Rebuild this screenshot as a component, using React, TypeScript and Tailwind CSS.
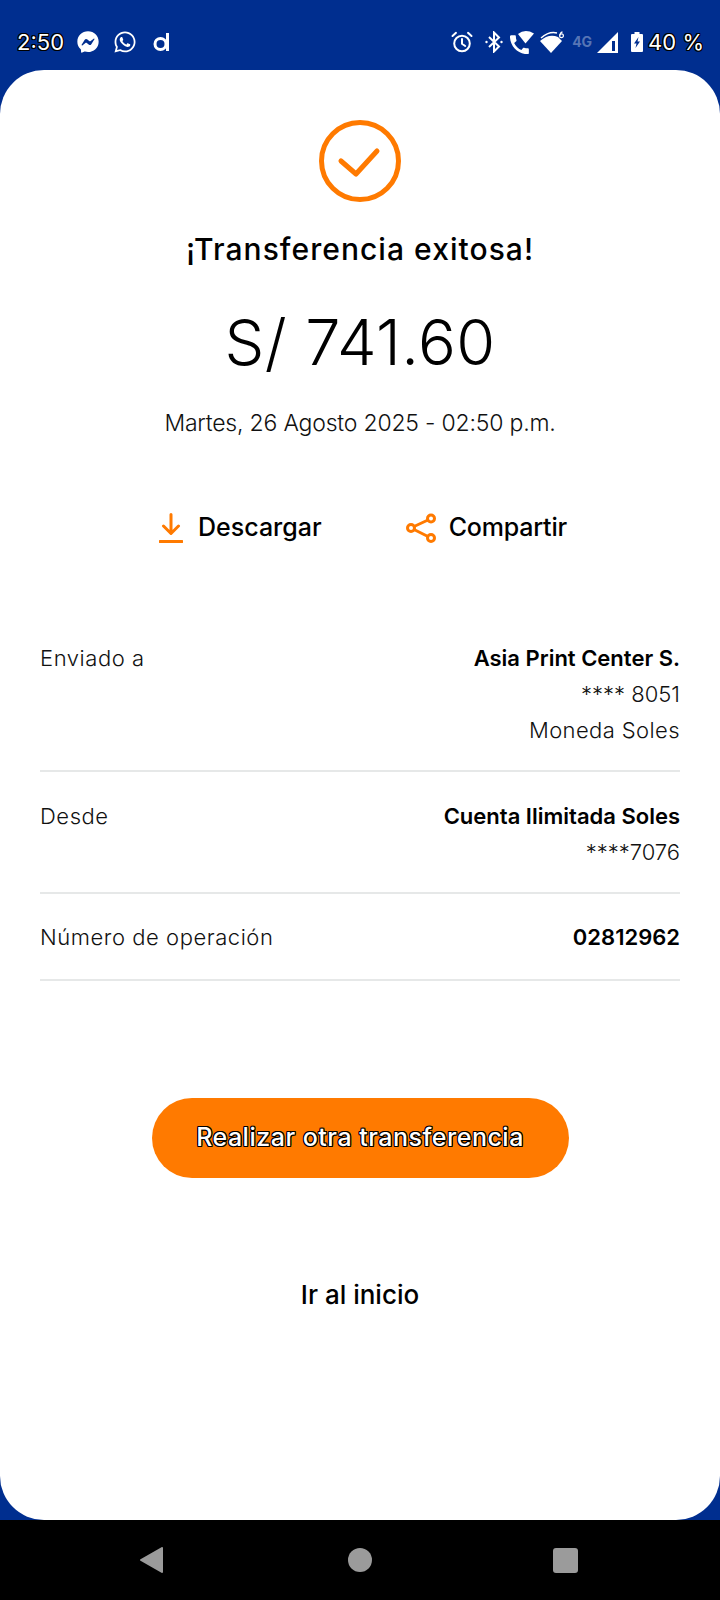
import React from "react";
import { FaFacebookMessenger, FaWhatsapp } from "react-icons/fa";

const outline =
  "[text-shadow:1px_0_0_#000,-1px_0_0_#000,0_1px_0_#000,0_-1px_0_#000,1px_1px_0_#000,-1px_-1px_0_#000,1px_-1px_0_#000,-1px_1px_0_#000]";

function Row({ label, lines, className }: { label: string; lines: string[]; className?: string }) {
  return (
    <div className={`flex justify-between border-b-2 border-[#e6e8e8] ${className}`}>
      <span className="text-[22px] font-light leading-[36px] tracking-[0.55px] text-[#111]">{label}</span>
      <div className="flex flex-col items-end text-[22px] font-light leading-[36px] text-[#111]">
        {lines.map((line, i) => (
          <span
            key={line}
            className={i === 0 ? "font-semibold text-black" : line.startsWith("*") ? "" : "tracking-[0.4px]"}
          >
            {line}
          </span>
        ))}
      </div>
    </div>
  );
}

function StatusIcons() {
  return (
    <div className="flex items-center">
      {/* alarm */}
      <svg viewBox="0 0 22 22" className="h-[22px] w-[22px]" fill="none" stroke="#fff" strokeWidth="2" strokeLinecap="round">
        <circle cx="11" cy="12.5" r="7.8" />
        <path d="M11 8 V12.8 L14.2 15 M1.5 5 L5 1.8 M20.5 5 L17 1.8" />
      </svg>
      {/* bluetooth */}
      <svg viewBox="0 0 18 22" className="ml-[12px] h-[22px] w-[18px]" fill="none" stroke="#fff" strokeWidth="2">
        <path d="M4 6 L14 15.5 L9 20.5 V1.5 L14 6.5 L4 16" />
        <circle cx="1.5" cy="11" r="1.2" fill="#fff" stroke="none" />
        <circle cx="16.5" cy="11" r="1.2" fill="#fff" stroke="none" />
      </svg>
      {/* wifi calling */}
      <svg viewBox="0 0 24 24" className="ml-[7px] h-[24px] w-[24px]" fill="#fff">
        <path d="M8 4 Q15 -1.5 24 3.5 L15.5 13.5 Z" />
        <g transform="translate(-3.2,2.2) scale(1.05)">
          <path d="M20.01 15.38c-1.23 0-2.42-.2-3.53-.56-.35-.12-.74-.03-1.01.24l-1.57 1.97c-2.83-1.35-5.48-3.9-6.89-6.83l1.95-1.66c.27-.28.35-.67.24-1.02-.37-1.11-.56-2.3-.56-3.53 0-.54-.45-.99-.99-.99H4.19C3.65 3 3 3.24 3 3.99 3 13.28 10.73 21 20.01 21c.71 0 .99-.63.99-1.18v-3.45c0-.54-.45-.99-.99-.99z" />
        </g>
      </svg>
      {/* wifi 6 */}
      <svg viewBox="0 0 25 23" className="ml-[6px] h-[23px] w-[25px]" fill="#fff">
        <path d="M0 10 Q9 2 18 6 L22 10 L11 22 Z" />
        <path d="M1 7 Q9 0 17 2" fill="none" stroke="#fff" strokeWidth="1.5" />
        <circle cx="21.5" cy="4.8" r="1.9" fill="none" stroke="#fff" strokeWidth="1.2" />
        <path d="M20 4.5 Q20 1.5 22.5 0.8" fill="none" stroke="#fff" strokeWidth="1.2" />
      </svg>
      <span className="ml-[7px] text-[14px] font-bold leading-none text-white/35">4G</span>
      {/* signal */}
      <svg viewBox="0 0 21 21" className="ml-[5px] h-[21px] w-[21px]" fill="#fff">
        <path d="M0 21 L21 0 V21 Z" />
        <rect x="15" y="9" width="3" height="10" fill="#002e8f" />
      </svg>
      {/* battery */}
      <svg viewBox="0 0 12 20" className="ml-[13px] h-[20px] w-[12px]" fill="#fff">
        <path d="M3.5 0 H8.5 V2 H11 Q12 2 12 3 V19 Q12 20 11 20 H1 Q0 20 0 19 V3 Q0 2 1 2 H3.5 Z" />
        <path d="M7.5 5 L3 11.5 H5.5 L4.5 16 L9 9.5 H6.5 Z" fill="#002e8f" />
      </svg>
      <span className={`ml-[5px] text-[22px] leading-none ${outline}`}>40 %</span>
    </div>
  );
}

export default function App() {
  return (
    <div className="flex h-[1600px] w-[720px] flex-col bg-[#002e8f] font-['Inter',sans-serif]">
      {/* status bar */}
      <div className="flex h-[70px] items-center justify-between pl-[17px] pr-[16px] pt-[14px] text-white">
        <div className="flex items-center">
          <span className={`w-[47px] text-[22px] leading-none ${outline}`}>2:50</span>
          <FaFacebookMessenger className="ml-[13px] h-[22px] w-[22px]" />
          <FaWhatsapp className="ml-[14px] h-[24px] w-[24px]" />
          {/* d logo */}
          <svg viewBox="0 0 16 18" className="ml-[16px] h-[18px] w-[16px]" fill="none" stroke="#fff" strokeWidth="3">
            <circle cx="7.5" cy="11" r="5.5" />
            <path d="M14.5 0 V18" />
          </svg>
        </div>
        <StatusIcons />
      </div>

      {/* card */}
      <div className="flex h-[1450px] flex-col rounded-[44px] bg-white">
        <div className="flex flex-col items-center pt-[50px]">
          <svg viewBox="0 0 82 82" className="h-[82px] w-[82px]" fill="none" stroke="#ff7a00">
            <circle cx="41" cy="41" r="38.5" strokeWidth="5" />
            <path d="M22 41 L37 54 L58 31" strokeWidth="5" strokeLinecap="round" strokeLinejoin="round" />
          </svg>
          <h1 className="mt-[27px] text-[30px] font-medium leading-[40px] tracking-[1.05px] text-black">¡Transferencia exitosa!</h1>
          <p className="mt-[33px] text-[63px] font-light leading-[80px] tracking-[0.4px] text-black">S/ 741.60</p>
          <p className="mt-[25px] text-[23px] font-light leading-[32px] tracking-[-0.2px] text-[#111]">Martes, 26 Agosto 2025 - 02:50 p.m.</p>
        </div>
        <div className="mt-[70px] flex justify-center gap-[84px] pl-[6px]">
          <div className="flex items-center gap-[15px] text-[25px] font-medium text-black">
            <svg viewBox="0 0 24 30" className="h-[30px] w-[24px]" fill="none" stroke="#ff7a00" strokeWidth="3" strokeLinecap="round" strokeLinejoin="round">
              <path d="M12 1.5 V20 M4.5 13 L12 20.5 L19.5 13 M1 28.5 H23" />
            </svg>
            Descargar
          </div>
          <div className="flex items-center gap-[13px] text-[25px] font-medium tracking-[-0.2px] text-black">
            <svg viewBox="0 0 30 30" className="h-[30px] w-[30px]" fill="none" stroke="#ff7a00" strokeWidth="3">
              <circle cx="25" cy="5.5" r="3.5" />
              <circle cx="5" cy="15" r="3.5" />
              <circle cx="25" cy="25" r="3.5" />
              <path d="M8 13.5 L22 7 M8 16.5 L22 23.5" />
            </svg>
            Compartir
          </div>
        </div>
        <div className="mt-[93px] flex flex-col px-[40px]">
          <Row label="Enviado a" lines={["Asia Print Center S.", "**** 8051", "Moneda Soles"]} className="pb-[22px]" />
          <Row label="Desde" lines={["Cuenta Ilimitada Soles", "****7076"]} className="pb-[22px] pt-[26px]" />
          <Row label="Número de operación" lines={["02812962"]} className="pb-[24px] pt-[25px]" />
        </div>
        <button className={`mx-auto mt-[117px] flex h-[80px] w-[417px] items-center justify-center rounded-full bg-[#ff7a00] text-[25px] font-medium tracking-[0.5px] text-white ${outline}`}>
          Realizar otra transferencia
        </button>
        <p className="mt-[99px] text-center text-[26px] font-medium leading-[36px] text-black">Ir al inicio</p>
      </div>

      {/* nav bar */}
      <div className="flex h-[80px] items-center bg-black pl-[140px]">
        <svg viewBox="0 0 23 26" className="h-[26px] w-[23px]" fill="#9b9b9b" stroke="#9b9b9b" strokeWidth="2" strokeLinejoin="round">
          <path d="M22 1 V25 L1 13 Z" />
        </svg>
        <div className="ml-[185px] h-[24px] w-[24px] rounded-full bg-[#9b9b9b]" />
        <div className="ml-[181px] h-[25px] w-[25px] rounded-[3px] bg-[#9b9b9b]" />
      </div>
    </div>
  );
}
